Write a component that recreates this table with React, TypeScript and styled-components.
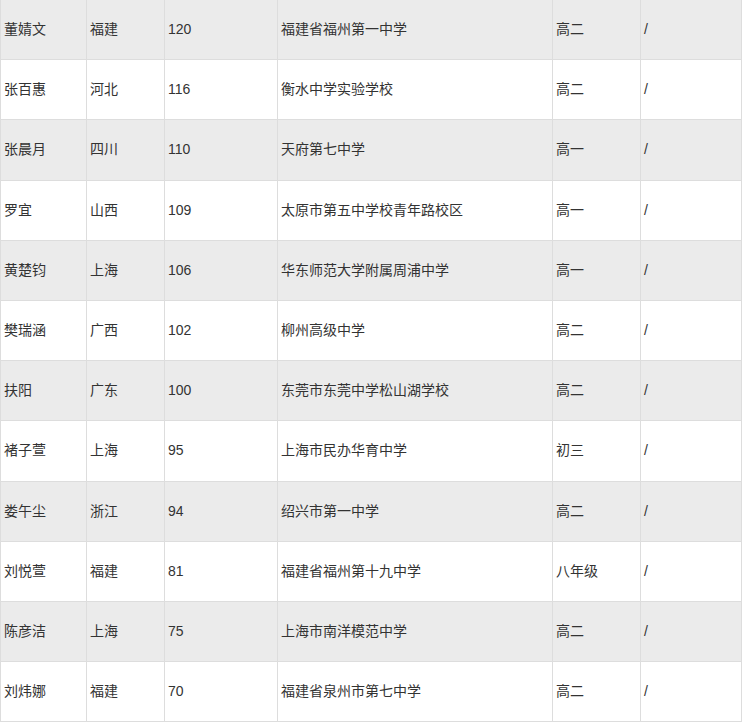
import React from "react";
import styled, { createGlobalStyle } from "styled-components";

const Global = createGlobalStyle`
  html, body { margin: 0; padding: 0; background: #fff; }
  body { font-family: "Liberation Sans", "Noto Sans CJK SC", sans-serif; color: #333; }
`;

const Table = styled.table`
  border-collapse: collapse;
  table-layout: fixed;
  width: 741px;
  margin-top: -1px;
  font-size: 14px;
`;

const Row = styled.tr<{ $striped: boolean }>`
  height: 60.2px;
  background: ${(p) => (p.$striped ? "#ebebeb" : "#ffffff")};
`;

const Cell = styled.td`
  border: 1px solid #dddddd;
  padding: 0 3px 1px 3px;
  vertical-align: middle;
  white-space: nowrap;
  color: #333;
  line-height: 20px;
`;

const widths = [86, 78, 113, 275, 88, 101];

const rows: string[][] = [
  ["董婧文", "福建", "120", "福建省福州第一中学", "高二", "/"],
  ["张百惠", "河北", "116", "衡水中学实验学校", "高二", "/"],
  ["张晨月", "四川", "110", "天府第七中学", "高一", "/"],
  ["罗宜", "山西", "109", "太原市第五中学校青年路校区", "高一", "/"],
  ["黄楚钧", "上海", "106", "华东师范大学附属周浦中学", "高一", "/"],
  ["樊瑞涵", "广西", "102", "柳州高级中学", "高二", "/"],
  ["扶阳", "广东", "100", "东莞市东莞中学松山湖学校", "高二", "/"],
  ["褚子萱", "上海", "95", "上海市民办华育中学", "初三", "/"],
  ["娄午尘", "浙江", "94", "绍兴市第一中学", "高二", "/"],
  ["刘悦萱", "福建", "81", "福建省福州第十九中学", "八年级", "/"],
  ["陈彦洁", "上海", "75", "上海市南洋模范中学", "高二", "/"],
  ["刘炜娜", "福建", "70", "福建省泉州市第七中学", "高二", "/"],
];

export default function App() {
  return (
    <>
      <Global />
      <Table>
        <colgroup>
          {widths.map((w, i) => (
            <col key={i} style={{ width: w }} />
          ))}
        </colgroup>
        <tbody>
          {rows.map((r, i) => (
            <Row key={i} $striped={i % 2 === 0}>
              {r.map((c, j) => (
                <Cell key={j}>{c}</Cell>
              ))}
            </Row>
          ))}
        </tbody>
      </Table>
    </>
  );
}
